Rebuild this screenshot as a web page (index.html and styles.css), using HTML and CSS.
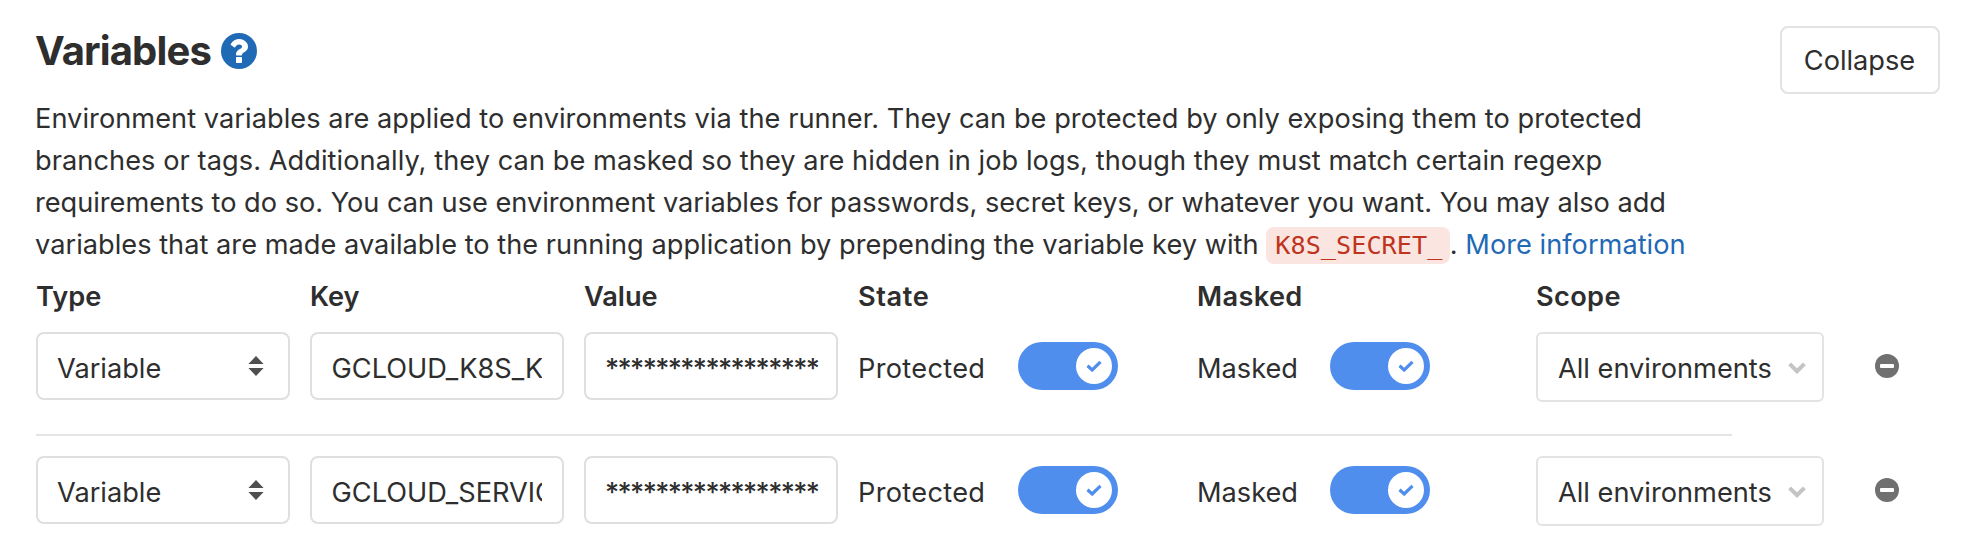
FILE: index.html
```
<!DOCTYPE html>
<html lang="en">
<head>
<meta charset="utf-8">
<title>Variables</title>
<link rel="stylesheet" href="styles.css">
</head>
<body>
<svg width="0" height="0" class="defs">
  <symbol id="check" viewBox="0 0 16 12"><path d="M1.5 5.800 6.200 10 14.500 1.800" fill="none" stroke="currentColor" stroke-width="3.2"/></symbol>
  <symbol id="chevron" viewBox="0 0 18 12"><path d="M1.6 1.8 9 9.2 16.4 1.8" fill="none" stroke="currentColor" stroke-width="4"/></symbol>
  <symbol id="sort" viewBox="0 0 16 20"><path d="M8 0 15.600 8H.4ZM8 20 .4 12h15.200Z" fill="currentColor"/></symbol>
  <symbol id="minus" viewBox="0 0 24 24"><circle cx="12" cy="12" r="12" fill="currentColor"/><rect x="5" y="10" width="14" height="4" rx="1" fill="#fff"/></symbol>
</svg>
<section class="settings">
  <header class="top">
    <h4 class="title"><span>Variables</span>
      <svg class="help" viewBox="0 0 1536 1536"><circle cx="768" cy="768" r="768" fill="currentColor"/><path fill="#fff" d="M896 1248v-192q0-14-9-23t-23-9H672q-14 0-23 9t-9 23v192q0 14 9 23t23 9h192q14 0 23-9t9-23zm256-672q0-88-55.500-163t-138.500-116-170-41q-243 0-371 213-15 24 8 42l132 100q7 6 19 6 16 0 25-12 53-68 86-92 34-24 86-24 48 0 85.500 26t37.500 59q0 38-20 61t-68 45q-63 28-115.500 86.500T640 892v36q0 14 9 23t23 9h192q14 0 23-9t9-23q0-19 21.500-49.500T972 829q32-18 49-28.500t46-35 44.500-48 28-60.500 12.500-81z"/></svg>
    </h4>
    <button class="collapse">Collapse</button>
  </header>
  <p class="desc">
    <span class="line l1">Environment variables are applied to environments via the runner. They can be protected by only exposing them to protected</span>
    <span class="line l2">branches or tags. Additionally, they can be masked so they are hidden in job logs, though they must match certain regexp</span>
    <span class="line l3">requirements to do so. You can use environment variables for passwords, secret keys, or whatever you want. You may also add</span>
    <span class="line l4">variables that are made available to the running application by prepending the variable key with <code>K8S_SECRET_</code>. <a>More information</a></span>
  </p>
  <div class="row head">
    <b class="tight">Type</b><b class="tight">Key</b><b class="tight">Value</b><b class="wide">State</b><b>Masked</b><b>Scope</b>
  </div>
  <div class="row">
    <div class="field select"><span>Variable</span><svg class="sort"><use href="#sort"/></svg></div>
    <div class="field"><span class="clip">GCLOUD_K8S_K</span></div>
    <div class="field"><span class="stars">*****************</span></div>
    <div class="state"><span class="protected">Protected</span><i class="toggle"><span class="knob"><svg class="check"><use href="#check"/></svg></span></i></div>
    <div class="state mask"><span>Masked</span><i class="toggle"><span class="knob"><svg class="check"><use href="#check"/></svg></span></i></div>
    <div class="field scope"><span>All environments</span><svg class="chev"><use href="#chevron"/></svg></div>
    <svg class="minus"><use href="#minus"/></svg>
  </div>
  <hr class="rule">
  <div class="row">
    <div class="field select"><span>Variable</span><svg class="sort"><use href="#sort"/></svg></div>
    <div class="field"><span class="clip">GCLOUD_SERVIC</span></div>
    <div class="field"><span class="stars">*****************</span></div>
    <div class="state"><span class="protected">Protected</span><i class="toggle"><span class="knob"><svg class="check"><use href="#check"/></svg></span></i></div>
    <div class="state mask"><span>Masked</span><i class="toggle"><span class="knob"><svg class="check"><use href="#check"/></svg></span></i></div>
    <div class="field scope"><span>All environments</span><svg class="chev"><use href="#chevron"/></svg></div>
    <svg class="minus"><use href="#minus"/></svg>
  </div>
</section>
</body>
</html>
```
FILE: styles.css
```
* { box-sizing: border-box; }
body { margin: 0; background: #fff; color: #2e2e2e; font: 400 27.2px/42px Inter, sans-serif; }
.defs { display: none; }
.settings { min-height: 552px; padding: 26px 26px 0 35px; }
.top { display: flex; justify-content: space-between; align-items: flex-start; height: 72px; }
.title { display: flex; align-items: center; gap: 10px; margin: 4px 0 0; font-size: 40px; font-weight: 650; line-height: 42px; letter-spacing: -.85px; }
.help { width: 36px; height: 36px; color: #1f69b5; }
.collapse { width: 160px; height: 68px; padding: 2px 1px 0 0; border: 2px solid #e3e3e3; border-radius: 8px; background: #fff; color: inherit; font: inherit; }
.desc { margin: 0; height: 168px; }
.line { display: block; height: 42px; white-space: nowrap; }
.l1 { letter-spacing: .047px; }
.l2 { letter-spacing: .06px; }
.l3 { letter-spacing: -.025px; }
.l4 { letter-spacing: .02px; }
code { margin-right: -.5px; padding: 4px 8px 4px 9px; border-radius: 8px; background: #fbe5e1; color: #c0341d; font: 25.2px "DejaVu Sans Mono", monospace; }
a { color: #1f69b5; }
.row { display: grid; grid-template-columns: 254px 254px 254px 319px 319px 288px 24px; column-gap: 20px; height: 68px; padding-left: 1px; align-items: start; }
.row .minus { margin-left: 31px; }
.head { height: 66px; padding-top: 10px; }
b { font-weight: 600; white-space: nowrap; letter-spacing: .35px; }
.tight { letter-spacing: 0; }
.wide { letter-spacing: .6px; }
.field { display: flex; align-items: center; height: 68px; padding: 0 20px; border: 2px solid #dfdfdf; border-radius: 8px; white-space: nowrap; }
.field > span, .state > span { padding-top: 5px; }
.select { padding: 0 24px 0 19px; justify-content: space-between; }
.sort { width: 16px; height: 20px; color: #4f4f4f; }
.clip { display: block; width: 210px; overflow: hidden; text-indent: -.5px; }
.stars { letter-spacing: -1.6px; margin: 0 -5px 0 -1px; font-weight: 500; }
.protected { letter-spacing: .3px; }
.scope { height: 70px; justify-content: space-between; padding: 0 16px 0 20px; border-color: #e3e3e3; border-radius: 6px; }
.scope > span { padding-top: 3px; }
.chev { width: 18px; height: 12px; margin-top: 2px; color: #c4c4c4; }
.state { display: flex; align-items: center; justify-content: space-between; height: 68px; padding-right: 59px; }
.mask { padding-right: 86px; }
.toggle { display: flex; justify-content: flex-end; width: 100px; height: 48px; padding: 6px; border-radius: 24px; background: #4f8eed; }
.knob { display: flex; align-items: center; justify-content: center; width: 36px; height: 36px; border-radius: 50%; background: #fff; color: #4f8eed; }
.check { width: 16px; height: 12px; }
.minus { width: 24px; height: 24px; margin-top: 22px; color: #707070; }
.rule { width: 1696px; height: 2px; margin: 34px 0 20px 1px; border: 0; background: #e5e5e5; }
```
